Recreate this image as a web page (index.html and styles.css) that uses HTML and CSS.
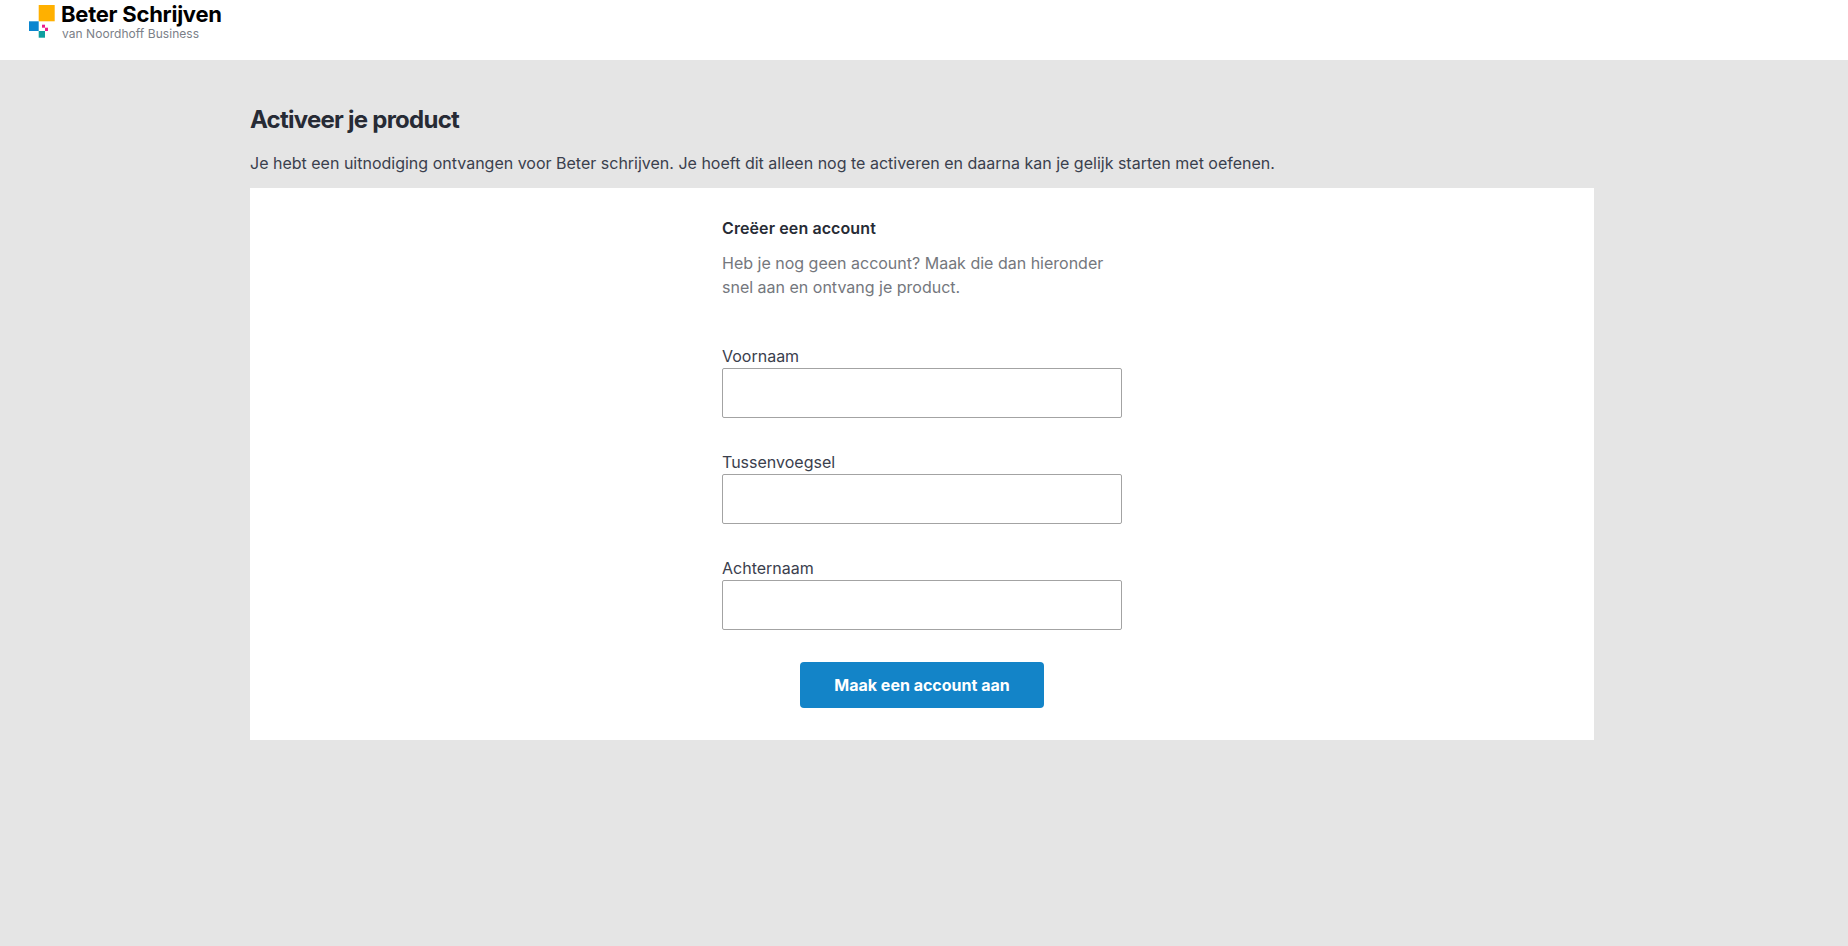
FILE: index.html
```html
<!DOCTYPE html>
<html lang="nl">
<head>
<meta charset="utf-8">
<title>Activeer je product</title>
<link rel="stylesheet" href="styles.css">
</head>
<body>
<header class="topbar">
  <svg class="logo" viewBox="0 0 26 33" width="26" height="33" aria-hidden="true">
    <rect x="9.7" y="0" width="16" height="16.3" fill="#ffb000"/>
    <rect x="0" y="16.3" width="9.7" height="9.7" fill="#0a86cf"/>
    <rect x="9.7" y="26" width="6.3" height="6.7" fill="#0f9ea0"/>
    <rect x="13" y="19.7" width="3" height="3" fill="#ec1c8e"/>
    <rect x="16" y="22.7" width="3" height="3.3" fill="#ec1c8e"/>
  </svg>
  <div class="brand">
    <div class="brand-name">Beter Schrijven</div>
    <div class="brand-sub">van Noordhoff Business</div>
  </div>
</header>
<main class="page">
  <h1 class="title">Activeer je product</h1>
  <p class="intro">Je hebt een uitnodiging ontvangen voor Beter schrijven. Je hoeft dit alleen nog te activeren en daarna kan je gelijk starten met oefenen.</p>
  <section class="card">
    <form class="form">
      <h2 class="form-title">Creëer een account</h2>
      <p class="form-text">Heb je nog geen account? Maak die dan hieronder snel aan en ontvang je product.</p>
      <div class="field"><label class="label" for="v">Voornaam</label><input class="input" id="v" type="text"></div>
      <div class="field"><label class="label" for="t">Tussenvoegsel</label><input class="input" id="t" type="text"></div>
      <div class="field"><label class="label" for="a">Achternaam</label><input class="input" id="a" type="text"></div>
      <div class="actions"><button class="button" type="button">Maak een account aan</button></div>
    </form>
  </section>
</main>
</body>
</html>
```
FILE: styles.css
```css
* { box-sizing: border-box; }
html, body { margin: 0; height: 100%; }
body {
  background: #e5e5e5;
  font-family: Inter, "Liberation Sans", sans-serif;
  color: #3a404d;
  overflow: hidden;
}
.topbar {
  height: 60px;
  background: #fff;
  display: flex;
  align-items: flex-start;
  padding: 5px 0 0 29px;
}
.logo { display: block; flex: none; }
.brand { margin-left: 6px; margin-top: -3px; }
.brand-name {
  font-size: 22px;
  line-height: 24px;
  font-weight: 700;
  color: #000;
  letter-spacing: -0.25px;
}
.brand-sub {
  margin-left: 1px;
  margin-top: 1px;
  font-size: 12px;
  line-height: 14px;
  color: #7b8088;
  letter-spacing: 0.05px;
}
.page { width: 1344px; margin-left: 250px; }
.title {
  margin: 0;
  padding-top: 44px;
  font-size: 24px;
  line-height: 32px;
  font-weight: 700;
  color: #272b35;
  letter-spacing: -0.75px;
}
.intro {
  margin: 15px 0 0;
  font-size: 16px;
  line-height: 24px;
}
.card {
  margin-top: 13px;
  height: 552px;
  background: #fff;
  padding: 28px 0 0 472px;
}
.form { width: 400px; }
.form-title {
  margin: 0;
  font-size: 16px;
  line-height: 24px;
  font-weight: 600;
  color: #272b35;
  letter-spacing: 0.1px;
}
.form-text {
  margin: 11px 0 47px;
  width: 390px;
  font-size: 16px;
  line-height: 24px;
  color: #74777d;
}
.field { margin-top: 34px; }
.label { display: block; margin-bottom: 2px; font-size: 16px; line-height: 20px; }
.input {
  display: block;
  width: 400px;
  height: 50px;
  background: #fff;
  border: 1px solid #a3a3a3;
  border-radius: 2px;
}
.actions { display: flex; justify-content: center; margin-top: 32px; }
.button {
  width: 244px;
  height: 46px;
  background: #1384c8;
  color: #fff;
  border: 0;
  border-radius: 4px;
  font-family: inherit;
  font-size: 16px;
  font-weight: 700;
}
```
